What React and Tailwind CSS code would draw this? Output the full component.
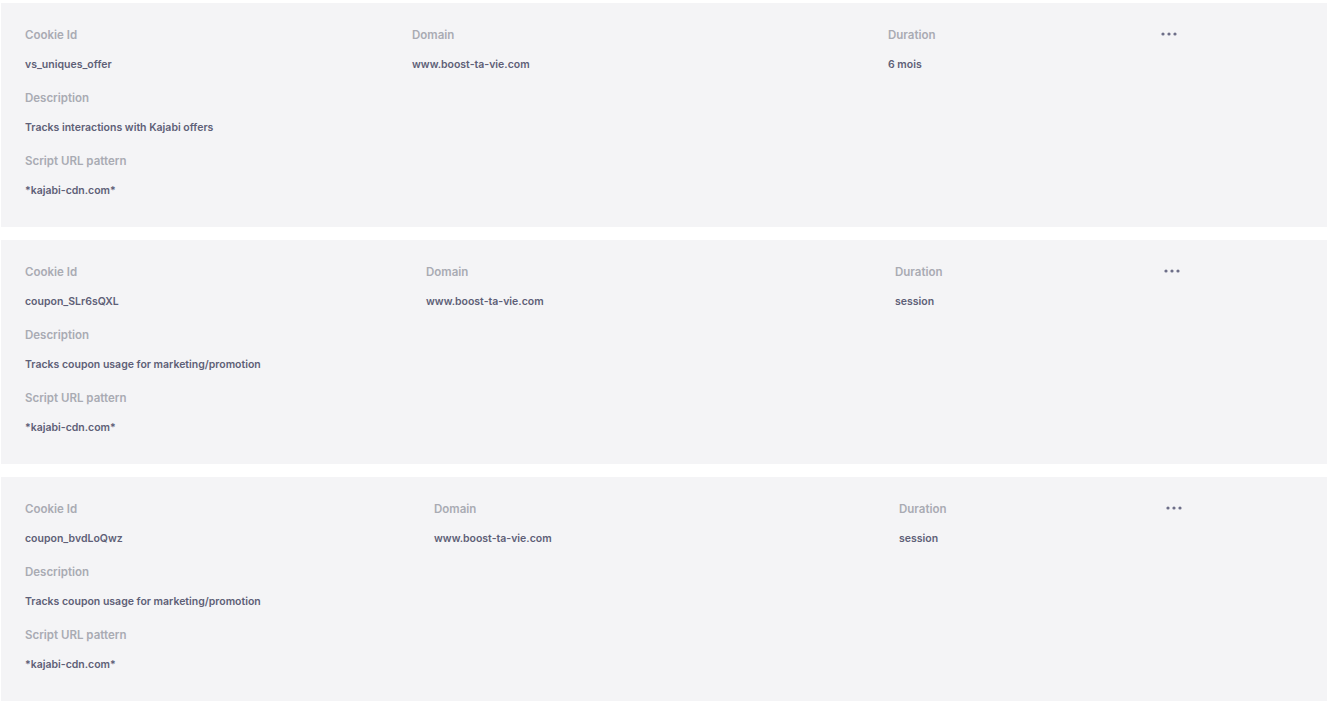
import React from "react";

const cards = [
  {
    id: "vs_uniques_offer",
    domain: "www.boost-ta-vie.com",
    duration: "6 mois",
    desc: "Tracks interactions with Kajabi offers",
    pattern: "*kajabi-cdn.com*",
    cols: "grid-cols-[387px_476px_274px_1fr]",
  },
  {
    id: "coupon_SLr6sQXL",
    domain: "www.boost-ta-vie.com",
    duration: "session",
    desc: "Tracks coupon usage for marketing/promotion",
    pattern: "*kajabi-cdn.com*",
    cols: "grid-cols-[401px_469px_270px_1fr]",
  },
  {
    id: "coupon_bvdLoQwz",
    domain: "www.boost-ta-vie.com",
    duration: "session",
    desc: "Tracks coupon usage for marketing/promotion",
    pattern: "*kajabi-cdn.com*",
    cols: "grid-cols-[409px_465px_268px_1fr]",
  },
];

function Field({ label, value }) {
  return (
    <div className="flex flex-col">
      <div className="text-[11.5px] leading-[20px] font-semibold text-[#a9abb3]">{label}</div>
      <div className="mt-[10px] text-[10.5px] leading-[20px] font-semibold text-[#5e5f77]">{value}</div>
    </div>
  );
}

function Dots() {
  return (
    <svg width="16" height="4" viewBox="0 0 16 4" className="mt-[7px] ml-[-1px]">
      <circle cx="2" cy="2" r="1.6" fill="#6d6e88" />
      <circle cx="8" cy="2" r="1.6" fill="#6d6e88" />
      <circle cx="14" cy="2" r="1.6" fill="#6d6e88" />
    </svg>
  );
}

function Card({ c }) {
  return (
    <div className="bg-[#f4f4f6] h-[224px] pl-[24px] pr-6 pt-[22px] flex flex-col gap-[13px]">
      <div className={`grid ${c.cols}`}>
        <Field label="Cookie Id" value={c.id} />
        <Field label="Domain" value={c.domain} />
        <Field label="Duration" value={c.duration} />
        <div><Dots /></div>
      </div>
      <Field label="Description" value={c.desc} />
      <Field label="Script URL pattern" value={c.pattern} />
    </div>
  );
}

export default function App() {
  return (
    <div
      className="bg-white w-[1331px] h-[705px] pt-[3px] pl-[1px] pr-[4px] flex flex-col gap-[13px]"
      style={{ fontFamily: "Inter, 'Noto Sans', sans-serif" }}
    >
      {cards.map((c) => (
        <Card key={c.id} c={c} />
      ))}
    </div>
  );
}
